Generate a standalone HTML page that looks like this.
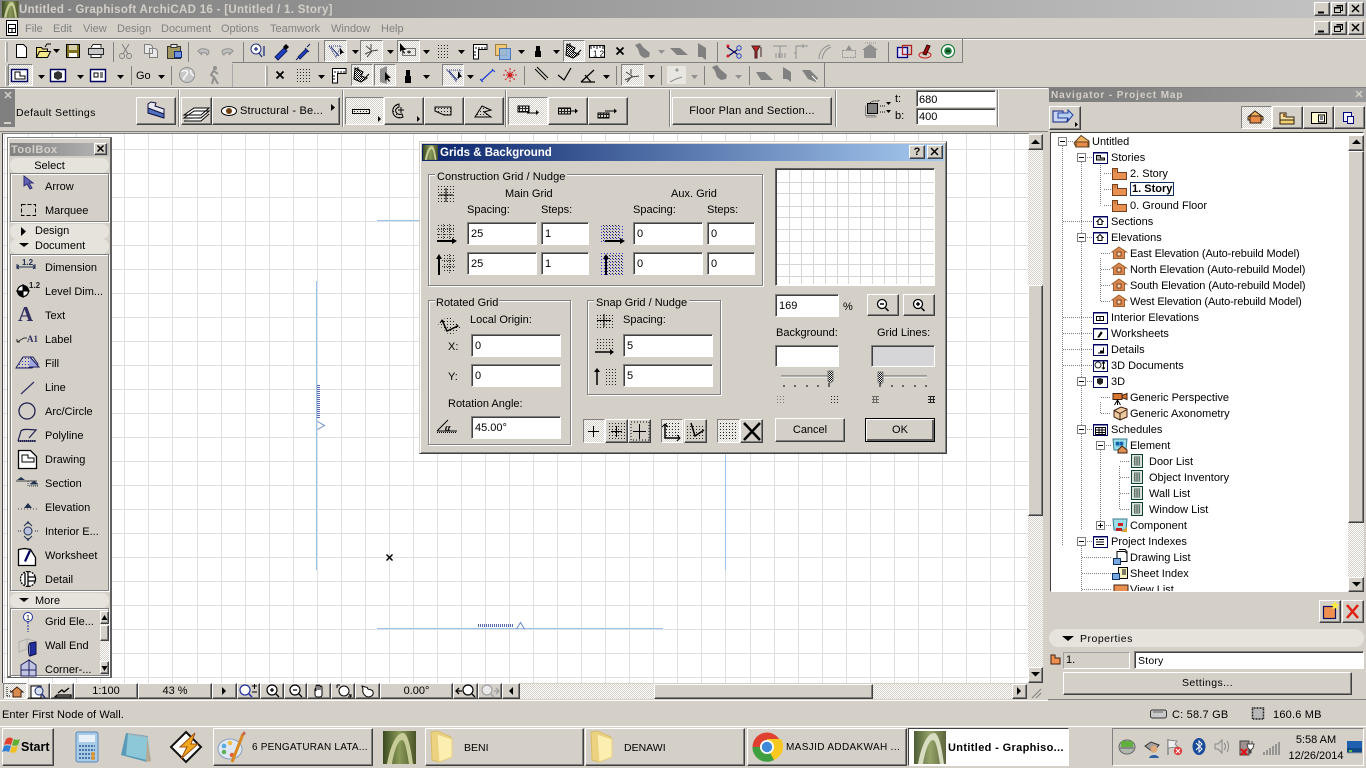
<!DOCTYPE html>
<html><head><meta charset="utf-8"><title>ArchiCAD</title>
<style>
html,body{margin:0;padding:0;width:1366px;height:768px;overflow:hidden;background:#d4d0c8}
body{position:relative;font:11px/14px "Liberation Sans",sans-serif;color:#000}
div,span{position:absolute;box-sizing:border-box}
.t{white-space:nowrap;height:14px;margin-top:1px}
.r{background:#d4d0c8;border:1px solid;border-color:#fff #404040 #404040 #fff;box-shadow:inset -1px -1px 0 #808080}
.f{background:#fff;border:1px solid;border-color:#808080 #fff #fff #808080;box-shadow:inset 1px 1px 0 #404040;padding:4px 0 0 3px;font-size:11px;line-height:14px;white-space:nowrap}
.p{border:1px solid;border-color:#808080 #fff #fff #808080;background-color:#e8e6e0;background-image:conic-gradient(#fff 25%,#d4d0c8 0 50%,#fff 0 75%,#d4d0c8 0);background-size:2px 2px}
.g{border:1px solid #808080;box-shadow:1px 1px 0 #fff,inset 1px 1px 0 #fff}
.pill{background:#e6e3dc;border-radius:7px;height:15px;left:10px;width:99px;text-align:left;margin-top:0}
.d{background-image:conic-gradient(#fff 25%,#d4d0c8 0 50%,#fff 0 75%,#d4d0c8 0);background-size:2px 2px}
.c{text-align:center}
.gr{color:#808080}
svg{position:absolute;left:0;top:0;overflow:visible}
</style></head><body>

<!-- title bar -->
<div style="left:0;top:0;width:1366px;height:18px;background:linear-gradient(90deg,#808080,#c4c4c4)"></div>
<div class="t" style="left:19px;top:2px;font-weight:bold;color:#d4d0c8;font-size:11.5px;letter-spacing:.3px">Untitled - Graphisoft ArchiCAD 16 - [Untitled / 1. Story]</div>
<div class="r" style="left:1314px;top:2px;width:16px;height:14px"></div>
<div class="r" style="left:1331px;top:2px;width:16px;height:14px"></div>
<div class="r" style="left:1348px;top:2px;width:16px;height:14px"></div>
<div class="r" style="left:1314px;top:21px;width:16px;height:14px"></div>
<div class="r" style="left:1331px;top:21px;width:16px;height:14px"></div>
<div class="r" style="left:1348px;top:21px;width:16px;height:14px"></div>

<!-- menu -->
<div class="t gr" style="left:25px;top:21px">File</div>
<div class="t gr" style="left:53px;top:21px">Edit</div>
<div class="t gr" style="left:83px;top:21px">View</div>
<div class="t gr" style="left:117px;top:21px">Design</div>
<div class="t gr" style="left:161px;top:21px">Document</div>
<div class="t gr" style="left:221px;top:21px">Options</div>
<div class="t gr" style="left:270px;top:21px">Teamwork</div>
<div class="t gr" style="left:331px;top:21px">Window</div>
<div class="t gr" style="left:381px;top:21px">Help</div>

<!-- toolbars frame -->
<div style="left:0;top:38px;width:1366px;height:1px;background:#808080"></div>
<div style="left:0;top:39px;width:1366px;height:1px;background:#fff"></div>
<div style="left:962px;top:39px;width:1px;height:24px;background:#808080"></div>
<div style="left:232px;top:62px;width:731px;height:1px;background:#808080"></div>
<div style="left:824px;top:63px;width:1px;height:24px;background:#808080"></div>
<div style="left:0;top:87px;width:1366px;height:1px;background:#808080"></div>
<div style="left:0;top:88px;width:1048px;height:1px;background:#fff"></div>

<!-- pressed toolbar buttons -->
<div class="p" style="left:324px;top:40px;width:23px;height:22px"></div>
<div class="p" style="left:360px;top:40px;width:23px;height:22px"></div>
<div class="p" style="left:397px;top:40px;width:23px;height:22px"></div>
<div class="p" style="left:563px;top:40px;width:22px;height:22px"></div>
<div class="p" style="left:8px;top:64px;width:25px;height:22px"></div>
<div class="p" style="left:351px;top:64px;width:22px;height:22px"></div>
<div class="p" style="left:374px;top:64px;width:22px;height:22px"></div>
<div class="p" style="left:442px;top:64px;width:22px;height:22px"></div>
<div class="p" style="left:621px;top:64px;width:23px;height:22px"></div>
<div class="t" style="left:136px;top:68px">Go</div>

<!-- info box -->
<div style="left:0;top:89px;width:15px;height:38px;background:#808080"></div>
<div class="t" style="left:16px;top:105px;font-size:10.5px;letter-spacing:.35px">Default Settings</div>
<div class="r" style="left:136px;top:97px;width:40px;height:28px"></div>
<div class="r" style="left:181px;top:97px;width:31px;height:28px"></div>
<div class="r" style="left:212px;top:97px;width:128px;height:28px"></div>
<div class="t" style="left:240px;top:103px;font-size:11px;letter-spacing:.2px">Structural - Be...</div>
<div class="p" style="left:345px;top:97px;width:39px;height:28px"></div>
<div class="r" style="left:384px;top:97px;width:40px;height:28px"></div>
<div class="r" style="left:424px;top:97px;width:40px;height:28px"></div>
<div class="r" style="left:464px;top:97px;width:40px;height:28px"></div>
<div class="p" style="left:508px;top:97px;width:40px;height:28px"></div>
<div class="r" style="left:548px;top:97px;width:40px;height:28px"></div>
<div class="r" style="left:588px;top:97px;width:40px;height:28px"></div>
<div class="r c" style="left:672px;top:97px;width:160px;height:28px;padding-top:6px;letter-spacing:.2px">Floor Plan and Section...</div>
<div class="t" style="left:895px;top:91px">t:</div>
<div class="t" style="left:895px;top:108px">b:</div>
<div class="f" style="left:916px;top:90px;width:80px;height:17px;padding:2px 0 0 2px">680</div>
<div class="f" style="left:916px;top:108px;width:80px;height:17px;padding:1px 0 0 2px">400</div>

<!-- canvas -->
<div style="left:0;top:131px;width:1048px;height:1px;background:#808080"></div>
<div style="left:2px;top:133px;width:1027px;height:550px;background:#fff;border-left:1px solid #404040;border-top:1px solid #808080"></div>

<svg width="1366" height="768" style="z-index:0">
<path shape-rendering="crispEdges" fill="none" stroke="#dfdfe2" d="M4.5 134V683M28.5 134V683M52.5 134V683M76.5 134V683M100.5 134V683M124.5 134V683M148.5 134V683M172.5 134V683M197.5 134V683M221.5 134V683M245.5 134V683M269.5 134V683M293.5 134V683M317.5 134V683M341.5 134V683M365.5 134V683M389.5 134V683M413.5 134V683M437.5 134V683M461.5 134V683M485.5 134V683M509.5 134V683M533.5 134V683M557.5 134V683M581.5 134V683M605.5 134V683M629.5 134V683M653.5 134V683M677.5 134V683M701.5 134V683M725.5 134V683M750.5 134V683M774.5 134V683M798.5 134V683M822.5 134V683M846.5 134V683M870.5 134V683M894.5 134V683M918.5 134V683M942.5 134V683M966.5 134V683M990.5 134V683M1014.5 134V683M3 149.5H1028M3 173.5H1028M3 197.5H1028M3 221.5H1028M3 245.5H1028M3 269.5H1028M3 293.5H1028M3 317.5H1028M3 341.5H1028M3 365.5H1028M3 389.5H1028M3 413.5H1028M3 437.5H1028M3 461.5H1028M3 485.5H1028M3 509.5H1028M3 533.5H1028M3 557.5H1028M3 581.5H1028M3 605.5H1028M3 629.5H1028M3 653.5H1028M3 677.5H1028"/>
<path shape-rendering="crispEdges" fill="none" stroke="#9cc4ea" d="M316.5 281V570M725.5 455V570M377 628.5H663M377 220.5H419"/>
<path fill="none" stroke="#5a6ab8" stroke-width="3" stroke-dasharray="1 1" d="M318.5 385V418M478 625.5H514"/>
<path fill="none" stroke="#6a8ac8" d="M317.500 421.500L324.500 425.500L317.500 429.500M516.500 629L520.500 622.500L524.500 629"/>
<path fill="none" stroke="#000" stroke-width="1.500" d="M386.500 554.500L392.500 560.500M392.500 554.500L386.500 560.500"/>
</svg>

<!-- vertical scrollbar -->
<div class="d" style="left:1028px;top:134px;width:15px;height:549px"></div>
<div class="r" style="left:1028px;top:134px;width:15px;height:16px"></div>
<div class="r" style="left:1028px;top:285px;width:15px;height:231px"></div>
<div class="r" style="left:1028px;top:667px;width:15px;height:16px"></div>

<!-- bottom bar -->
<div style="left:0;top:683px;width:1048px;height:17px;background:#d4d0c8"></div>
<div class="p" style="left:3px;top:683px;width:24px;height:16px"></div>
<div class="r" style="left:27px;top:683px;width:23px;height:16px"></div>
<div class="r" style="left:50px;top:683px;width:24px;height:16px"></div>
<div class="r c" style="left:74px;top:683px;width:64px;height:16px;line-height:15px">1:100</div>
<div class="r c" style="left:138px;top:683px;width:74px;height:16px;line-height:15px">43 %</div>
<div class="r" style="left:212px;top:683px;width:25px;height:16px"></div>
<div class="r" style="left:237px;top:683px;width:23px;height:16px"></div>
<div class="r" style="left:260px;top:683px;width:24px;height:16px"></div>
<div class="r" style="left:284px;top:683px;width:23px;height:16px"></div>
<div class="r" style="left:307px;top:683px;width:24px;height:16px"></div>
<div class="r" style="left:331px;top:683px;width:24px;height:16px"></div>
<div class="r" style="left:355px;top:683px;width:25px;height:16px"></div>
<div class="r c" style="left:380px;top:683px;width:73px;height:16px;line-height:15px">0.00°</div>
<div class="r" style="left:453px;top:683px;width:25px;height:16px"></div>
<div class="r" style="left:478px;top:683px;width:24px;height:16px"></div>
<div class="r" style="left:502px;top:683px;width:18px;height:16px"></div>
<div class="d" style="left:520px;top:684px;width:494px;height:15px"></div>
<div class="r" style="left:654px;top:684px;width:219px;height:15px"></div>
<div class="r" style="left:1012px;top:684px;width:15px;height:15px"></div>
<div style="left:0;top:700px;width:1048px;height:1px;background:#fff"></div>

<!-- toolbox -->
<div style="left:7px;top:137px;width:105px;height:541px;background:#d4d0c8;border:1px solid #808080;border-right:2px solid #606060;border-bottom:2px solid #606060;box-shadow:inset 1px 1px 0 #fff"></div>
<div style="left:10px;top:143px;width:99px;height:13px;background:linear-gradient(90deg,#808080,#b8b8b8)"></div>
<div class="t" style="left:11px;top:142px;font-weight:bold;color:#d4d0c8;letter-spacing:.5px">ToolBox</div>
<div class="r" style="left:94px;top:143px;width:13px;height:12px"></div>
<div class="pill t c" style="top:158px;text-align:center;padding-right:20px;line-height:16px;width:99px;padding-left:0">Select</div>
<div class="g" style="left:10px;top:173px;width:99px;height:49px"></div>
<div class="pill t" style="top:224px;padding-left:25px;line-height:15px">Design</div>
<div class="pill t" style="top:239px;padding-left:25px;line-height:15px">Document</div>
<div class="g" style="left:10px;top:254px;width:99px;height:337px"></div>
<div class="pill t" style="top:593px;padding-left:25px;line-height:17px">More</div>
<div class="g" style="left:10px;top:608px;width:99px;height:68px"></div>
<div class="t" style="left:45px;top:179px">Arrow</div>
<div class="t" style="left:45px;top:203px">Marquee</div>
<div class="t" style="left:45px;top:260px">Dimension</div>
<div class="t" style="left:45px;top:284px">Level Dim...</div>
<div class="t" style="left:45px;top:308px">Text</div>
<div class="t" style="left:45px;top:332px">Label</div>
<div class="t" style="left:45px;top:356px">Fill</div>
<div class="t" style="left:45px;top:380px">Line</div>
<div class="t" style="left:45px;top:404px">Arc/Circle</div>
<div class="t" style="left:45px;top:428px">Polyline</div>
<div class="t" style="left:45px;top:452px">Drawing</div>
<div class="t" style="left:45px;top:476px">Section</div>
<div class="t" style="left:45px;top:500px">Elevation</div>
<div class="t" style="left:45px;top:524px">Interior E...</div>
<div class="t" style="left:45px;top:548px">Worksheet</div>
<div class="t" style="left:45px;top:572px">Detail</div>
<div class="t" style="left:45px;top:614px">Grid Ele...</div>
<div class="t" style="left:45px;top:638px">Wall End</div>
<div class="t" style="left:45px;top:662px">Corner-...</div>
<div class="d" style="left:100px;top:611px;width:9px;height:63px"></div>
<div class="r" style="left:100px;top:611px;width:9px;height:13px"></div>
<div class="r" style="left:100px;top:625px;width:9px;height:16px"></div>
<div class="r" style="left:100px;top:661px;width:9px;height:13px"></div>

<!-- navigator -->
<div style="left:1048px;top:88px;width:318px;height:611px;background:#d4d0c8"></div>
<div style="left:1049px;top:88px;width:317px;height:14px;background:linear-gradient(90deg,#7c7c7c,#9a9a9a)"></div>
<div class="t" style="left:1051px;top:88px;font-weight:bold;color:#d4d0c8;font-size:10px;letter-spacing:.9px">Navigator - Project Map</div>
<div class="r" style="left:1049px;top:106px;width:32px;height:24px"></div>
<div class="p" style="left:1241px;top:106px;width:31px;height:23px"></div>
<div class="r" style="left:1272px;top:106px;width:31px;height:23px"></div>
<div class="r" style="left:1303px;top:106px;width:31px;height:23px"></div>
<div class="r" style="left:1334px;top:106px;width:31px;height:23px"></div>
<div style="left:1050px;top:132px;width:314px;height:460px;background:#fff;border:1px solid;border-color:#404040 #fff #fff #404040;overflow:hidden">
<div style="left:-1051px;top:-133px;width:1366px;height:768px">
<svg width="1366" height="768">
<defs>
<g id="st"><path d="M.5 .5H5.500V4.500H14.500V11.500H.5Z" fill="#e89050" stroke="#704020"/><path d="M2 1.500h2v2h-2z" fill="#c07030"/></g>
<g id="el"><path d="M7 0L14.500 5H12.500V11.500H1.500V5H0Z" fill="#d98a52" stroke="#a06030"/><rect x="5" y="5" width="4" height="4" fill="#f2d8a8" stroke="#804020"/></g>
<g id="bx"><rect x=".5" y=".5" width="14" height="11" fill="#fff" stroke="#000060"/><path d="M.5 1h14" stroke="#000060"/></g>
<g id="li"><rect x=".5" y=".5" width="11" height="13" fill="#d8e4dc" stroke="#104030"/><path d="M3 3h6M3 5h6M3 7h6M3 9h6M3 11h6M3.500 3v8M6 3v8M8.500 3v8" stroke="#607068" fill="none"/></g>
<g id="mn"><rect x=".5" y=".5" width="8" height="8" fill="#fff" stroke="#808080"/><path d="M2 4.500h5" stroke="#000"/></g>
<g id="pl"><rect x=".5" y=".5" width="8" height="8" fill="#fff" stroke="#808080"/><path d="M2 4.500h5M4.500 2v5" stroke="#000"/></g>
</defs>
<g fill="none" stroke="#808080" stroke-dasharray="1 1" shape-rendering="crispEdges">
<path d="M1062.500 146V545M1081.500 162V238M1081.500 242V382M1081.500 386V430M1081.500 434V530M1100.500 165V205.500M1100.500 258V301.500M1100.500 402V413.500M1100.500 450V525M1119.500 466V509.500"/>
<path d="M1066 141.500H1074M1085 157.500H1092M1104 173.500H1111M1104 189.500H1111M1104 205.500H1111M1063 221.500H1092M1085 237.500H1092M1101 253.500H1111M1101 269.500H1111M1101 285.500H1111M1101 301.500H1111M1063 317.500H1092M1063 333.500H1092M1063 349.500H1092M1063 365.500H1092M1085 381.500H1092M1101 397.500H1111M1101 413.500H1111M1085 429.500H1092M1104 445.500H1111M1120 461.500H1130M1120 477.500H1130M1120 493.500H1130M1120 509.500H1130M1104 525.500H1111M1085 541.500H1092M1082 557.500H1111M1082 573.500H1111M1082 589.500H1111"/>
<path d="M1081.500 546V592"/>
</g>
<use href="#mn" x="1058" y="137"/><use href="#mn" x="1077" y="153"/><use href="#mn" x="1077" y="233"/><use href="#mn" x="1077" y="377"/><use href="#mn" x="1077" y="425"/><use href="#mn" x="1096" y="441"/><use href="#pl" x="1096" y="521"/><use href="#mn" x="1077" y="537"/>
<path d="M1074 143L1081 135.500L1089 141V147H1076Z" fill="#f0b060" stroke="#604020"/><path d="M1076 147V142H1088V147Z" fill="#e88a48" stroke="#604020"/>
<use href="#bx" x="1093" y="152"/><path d="M1096.500 160v-4.500h4v2.500h4v2z" fill="#b0b0b0" stroke="#000"/>
<use href="#st" x="1112" y="168"/><use href="#st" x="1112" y="184"/><use href="#st" x="1112" y="200"/>
<use href="#bx" x="1093" y="216"/><path d="M1097 221.500l3-3 3 3h-1v3h-4v-3z" fill="#fff" stroke="#000"/>
<use href="#bx" x="1093" y="232"/><path d="M1097 237.500l3-3 3 3h-1v3h-4v-3z" fill="#fff" stroke="#000"/>
<use href="#el" x="1112" y="247"/><use href="#el" x="1112" y="263"/><use href="#el" x="1112" y="279"/><use href="#el" x="1112" y="295"/>
<use href="#bx" x="1093" y="312"/><path d="M1096.500 316.500h7v4h-7zM1100 316.500v4" fill="none" stroke="#000"/>
<use href="#bx" x="1093" y="328"/><path d="M1098 337l3-5 1 1-3 4zM1096 339.500h8" fill="#444" stroke="#000"/>
<use href="#bx" x="1093" y="344"/><path d="M1098 352.500h2v-2h3v-3h1v6h-6z" fill="#000"/>
<use href="#bx" x="1093" y="360"/><circle cx="1098" cy="365" r="3" fill="none" stroke="#222"/><path d="M1103.500 362v7M1102 363.500l1.500-1.500 1.500 1.500M1102 367.500l1.500 1.500 1.500-1.500" fill="none" stroke="#000"/>
<use href="#bx" x="1093" y="376"/><path d="M1097 379l3-1 3 1v4l-3 2-3-2z" fill="#222"/>
<path d="M1113 393.500h9v6h-9zM1122 395.500l5-2v6l-5-2z" fill="#d87830" stroke="#402010"/><path d="M1117.500 400v5M1114.500 405l3-5 3 5" fill="none" stroke="#000"/>
<path d="M1114 410.500l7-3.500 6 2v8l-7 3-6-3z" fill="#eec9a0" stroke="#402010"/><path d="M1114 410.500l6 3v7M1120 413.500l7-4" fill="none" stroke="#402010"/>
<use href="#bx" x="1093" y="424"/><path d="M1095.500 427.500h10v7h-10zM1095.500 430h10M1095.500 432.500h10M1099 427.500v7M1102 427.500v7" fill="none" stroke="#000"/>
<path d="M1113 439h14l-1 11h-12z" fill="#9adfe8" stroke="#3a7a90"/><path d="M1116 442h3v3h-3zM1120 442h3v3h-3zM1116 446h7" fill="#1060b0" stroke="#1060b0" stroke-width=".6"/><path d="M1118 450l4-4 5 4v3h-9z" fill="#e09050" stroke="#402010"/>
<use href="#li" x="1131" y="454"/><use href="#li" x="1131" y="470"/><use href="#li" x="1131" y="486"/><use href="#li" x="1131" y="502"/>
<path d="M1113 519h14l-1 11h-12z" fill="#9adfe8" stroke="#3a7a90"/><path d="M1118 523h5v3h-5z" fill="#d02020"/><path d="M1116 528h6v3h-6z" fill="#c02020"/><path d="M1121 532l6-5v5z" fill="#e0a030"/>
<use href="#bx" x="1093" y="536"/><path d="M1096 539.500h2M1096 542h8M1096 544.500h8M1099 539.500h5" stroke="#000" fill="none"/>
<path d="M1117 551.500h8l2 2v8h-10z" fill="#fff" stroke="#000"/><path d="M1119 549.500h6l2 2v2" fill="none" stroke="#000"/><rect x="1113.500" y="558.500" width="7" height="6" fill="#78a8e0" stroke="#103060"/>
<rect x="1118.500" y="567.500" width="9" height="11" fill="#f8f4c0" stroke="#000"/><path d="M1122 570h4M1122 572h4M1122 574h4" stroke="#000"/><rect x="1112.500" y="573.500" width="7" height="6" fill="#78a8e0" stroke="#103060"/>
<rect x="1114" y="585" width="14" height="10" fill="#e89050" stroke="#402010"/>
</svg>
<div class="t" style="left:1092px;top:134px">Untitled</div>
<div class="t" style="left:1111px;top:150px">Stories</div>
<div class="t" style="left:1130px;top:166px">2. Story</div>
<div class="t" style="left:1130px;top:182px;font-weight:bold;border:1px solid #103060;padding:0 1px;line-height:13px;height:14px;margin-top:0">1. Story</div>
<div class="t" style="left:1130px;top:198px">0. Ground Floor</div>
<div class="t" style="left:1111px;top:214px">Sections</div>
<div class="t" style="left:1111px;top:230px">Elevations</div>
<div class="t" style="left:1130px;top:246px;letter-spacing:-.1px">East Elevation (Auto-rebuild Model)</div>
<div class="t" style="left:1130px;top:262px;letter-spacing:-.07px">North Elevation (Auto-rebuild Model)</div>
<div class="t" style="left:1130px;top:278px;letter-spacing:-.12px">South Elevation (Auto-rebuild Model)</div>
<div class="t" style="left:1130px;top:294px;letter-spacing:-.12px">West Elevation (Auto-rebuild Model)</div>
<div class="t" style="left:1111px;top:310px">Interior Elevations</div>
<div class="t" style="left:1111px;top:326px">Worksheets</div>
<div class="t" style="left:1111px;top:342px">Details</div>
<div class="t" style="left:1111px;top:358px">3D Documents</div>
<div class="t" style="left:1111px;top:374px">3D</div>
<div class="t" style="left:1130px;top:390px">Generic Perspective</div>
<div class="t" style="left:1130px;top:406px">Generic Axonometry</div>
<div class="t" style="left:1111px;top:422px">Schedules</div>
<div class="t" style="left:1130px;top:438px">Element</div>
<div class="t" style="left:1149px;top:454px">Door List</div>
<div class="t" style="left:1149px;top:470px">Object Inventory</div>
<div class="t" style="left:1149px;top:486px">Wall List</div>
<div class="t" style="left:1149px;top:502px">Window List</div>
<div class="t" style="left:1130px;top:518px">Component</div>
<div class="t" style="left:1111px;top:534px">Project Indexes</div>
<div class="t" style="left:1130px;top:550px">Drawing List</div>
<div class="t" style="left:1130px;top:566px">Sheet Index</div>
<div class="t" style="left:1130px;top:582px">View List</div>
</div></div>
<div class="r" style="left:1348px;top:135px;width:16px;height:16px"></div>
<div class="r" style="left:1348px;top:151px;width:16px;height:372px"></div>
<div class="d" style="left:1348px;top:523px;width:16px;height:54px"></div>
<div class="r" style="left:1348px;top:577px;width:16px;height:15px"></div>
<div class="r" style="left:1319px;top:600px;width:22px;height:23px"></div>
<div class="r" style="left:1342px;top:600px;width:22px;height:23px"></div>
<div style="left:1049px;top:629px;width:315px;height:18px;background:#e6e3dc;border-radius:9px"></div>
<div class="t" style="left:1080px;top:631px;font-size:10.5px;letter-spacing:.5px">Properties</div>
<div class="t" style="left:1063px;top:652px;width:67px;height:17px;border:1px solid;border-color:#a0a0a0 #fff #fff #a0a0a0;padding-left:2px;line-height:15px;background:#d4d0c8;margin-top:0">1.</div>
<div class="f" style="left:1134px;top:651px;width:230px;height:18px;padding:2px 0 0 3px;font-size:10.5px;letter-spacing:.2px">Story</div>
<div class="r c" style="left:1063px;top:672px;width:289px;height:23px;line-height:21px;font-size:10.5px;letter-spacing:.4px">Settings...</div>
<div style="left:1048px;top:699px;width:318px;height:1px;background:#808080"></div>

<!-- status -->
<div class="t" style="left:2px;top:707px;letter-spacing:.1px">Enter First Node of Wall.</div>
<div class="t" style="left:1172px;top:707px;letter-spacing:.2px">C: 58.7 GB</div>
<div class="t" style="left:1273px;top:707px;letter-spacing:.2px">160.6 MB</div>

<!-- dialog -->
<div style="left:419px;top:141px;width:528px;height:313px;background:#d4d0c8;border:1px solid;border-color:#d4d0c8 #404040 #404040 #d4d0c8;box-shadow:inset 1px 1px 0 #fff,inset -1px -1px 0 #808080"></div>
<div style="left:422px;top:144px;width:522px;height:17px;background:linear-gradient(90deg,#0a246a,#a6caf0)"></div>
<div class="t" style="left:440px;top:145px;font-weight:bold;color:#fff;font-size:11.5px">Grids &amp; Background</div>
<div class="r c" style="left:909px;top:145px;width:16px;height:14px;font-weight:bold;line-height:12px">?</div>
<div class="r" style="left:927px;top:145px;width:16px;height:14px"></div>

<div class="g" style="left:428px;top:174px;width:335px;height:112px"></div>
<div class="t" style="left:435px;top:169px;background:#d4d0c8;padding:0 2px;letter-spacing:.05px">Construction Grid / Nudge</div>
<div class="t" style="left:505px;top:186px">Main Grid</div>
<div class="t" style="left:671px;top:186px">Aux. Grid</div>
<div class="t" style="left:467px;top:202px">Spacing:</div>
<div class="t" style="left:541px;top:202px">Steps:</div>
<div class="t" style="left:633px;top:202px">Spacing:</div>
<div class="t" style="left:707px;top:202px">Steps:</div>
<div class="f" style="left:467px;top:222px;width:70px;height:23px">25</div>
<div class="f" style="left:541px;top:222px;width:48px;height:23px">1</div>
<div class="f" style="left:633px;top:222px;width:70px;height:23px">0</div>
<div class="f" style="left:707px;top:222px;width:48px;height:23px">0</div>
<div class="f" style="left:467px;top:252px;width:70px;height:23px">25</div>
<div class="f" style="left:541px;top:252px;width:48px;height:23px">1</div>
<div class="f" style="left:633px;top:252px;width:70px;height:23px">0</div>
<div class="f" style="left:707px;top:252px;width:48px;height:23px">0</div>

<div class="g" style="left:428px;top:300px;width:143px;height:145px"></div>
<div class="t" style="left:435px;top:295px;background:#d4d0c8;padding:0 1px">Rotated Grid</div>
<div class="t" style="left:470px;top:312px">Local Origin:</div>
<div class="t" style="left:448px;top:339px">X:</div>
<div class="t" style="left:448px;top:369px">Y:</div>
<div class="t" style="left:448px;top:396px">Rotation Angle:</div>
<div class="f" style="left:471px;top:334px;width:90px;height:23px">0</div>
<div class="f" style="left:471px;top:364px;width:90px;height:23px">0</div>
<div class="f" style="left:471px;top:416px;width:90px;height:23px">45.00°</div>

<div class="g" style="left:587px;top:300px;width:134px;height:95px"></div>
<div class="t" style="left:594px;top:295px;background:#d4d0c8;padding:0 2px">Snap Grid / Nudge</div>
<div class="t" style="left:623px;top:312px">Spacing:</div>
<div class="f" style="left:623px;top:334px;width:90px;height:23px">5</div>
<div class="f" style="left:623px;top:364px;width:90px;height:23px">5</div>

<div class="p" style="left:583px;top:419px;width:22px;height:24px"></div>
<div class="r" style="left:605px;top:419px;width:23px;height:24px"></div>
<div class="r" style="left:628px;top:419px;width:23px;height:24px"></div>
<div class="p" style="left:661px;top:419px;width:22px;height:24px"></div>
<div class="r" style="left:684px;top:419px;width:23px;height:24px"></div>
<div class="p" style="left:717px;top:419px;width:23px;height:24px"></div>
<div class="r" style="left:740px;top:419px;width:23px;height:24px"></div>

<div style="left:775px;top:168px;width:160px;height:118px;background:#fff;border:1px solid;border-color:#606060 #fff #fff #606060;box-shadow:inset 1px 1px 0 #404040"></div>
<svg width="1366" height="768"><path shape-rendering="crispEdges" fill="none" stroke="#d6d6d6" d="M789.500 170V284M801.500 170V284M813.500 170V284M825.500 170V284M837.500 170V284M848.500 170V284M860.500 170V284M872.500 170V284M884.500 170V284M896.500 170V284M908.500 170V284M920.500 170V284M777 182.500H934M777 193.500H934M777 206.500H934M777 217.500H934M777 229.500H934M777 241.500H934M777 253.500H934M777 264.500H934M777 276.500H934"/></svg>
<div class="f" style="left:775px;top:294px;width:64px;height:23px">169</div>
<div class="t" style="left:843px;top:299px">%</div>
<div class="r" style="left:867px;top:294px;width:32px;height:22px"></div>
<div class="r" style="left:903px;top:294px;width:32px;height:22px"></div>
<div class="t" style="left:776px;top:325px">Background:</div>
<div class="t" style="left:877px;top:325px">Grid Lines:</div>
<div class="f" style="left:775px;top:345px;width:64px;height:22px"></div>
<div class="f" style="left:871px;top:345px;width:64px;height:22px;background:#d6d6d8"></div>
<div class="r c" style="left:775px;top:418px;width:70px;height:24px;line-height:23px">Cancel</div>
<div class="r c" style="left:865px;top:418px;width:70px;height:24px;line-height:22px;border:1px solid #000;box-shadow:inset 1px 1px 0 #fff,inset -2px -2px 0 #606060">OK</div>

<!-- taskbar -->
<div style="left:0;top:726px;width:1366px;height:42px;background:#d4d0c8;border-top:1px solid #fff"></div>
<div class="r" style="left:2px;top:728px;width:52px;height:38px"></div>
<div class="t" style="left:21px;top:739px;font-weight:bold;font-size:12.5px">Start</div>
<div class="r" style="left:213px;top:728px;width:160px;height:38px"></div>
<div class="t" style="left:252px;top:740px;font-size:10px;letter-spacing:.2px">6 PENGATURAN LATA...</div>
<div class="r" style="left:425px;top:728px;width:159px;height:38px"></div>
<div class="t" style="left:464px;top:740px;font-size:10.5px">BENI</div>
<div class="r" style="left:585px;top:728px;width:160px;height:38px"></div>
<div class="t" style="left:624px;top:740px;font-size:10.5px">DENAWI</div>
<div class="r" style="left:747px;top:728px;width:160px;height:38px"></div>
<div class="t" style="left:786px;top:740px;font-size:10px;letter-spacing:.35px">MASJID ADDAKWAH ...</div>
<div style="left:908px;top:728px;width:161px;height:38px;background:#fff;border:1px solid;border-color:#404040 #fff #fff #404040"></div>
<div class="t" style="left:948px;top:740px;font-weight:bold;letter-spacing:.35px">Untitled - Graphiso...</div>
<div style="left:1112px;top:728px;width:252px;height:38px;border:1px solid;border-color:#808080 #fff #fff #808080"></div>
<div class="t c" style="left:1283px;top:732px;width:66px">5:58 AM</div>
<div class="t c" style="left:1283px;top:748px;width:66px">12/26/2014</div>

<!-- icon overlay -->
<svg width="1366" height="768" style="z-index:5;pointer-events:none">
<defs>
<linearGradient id="ac" x1="0" x2="1"><stop offset="0" stop-color="#3a4a20"/><stop offset=".5" stop-color="#8a9a58"/><stop offset="1" stop-color="#4a5228"/></linearGradient>
<path id="dd" d="M0 0h7L3.500 4z"/>
<g id="fo"><path d="M0 1L6 0L20 6V26L8 31L1 29Z" fill="#ecd280" stroke="#d8bc68"/><path d="M6 3L21 8V26L8 31Z" fill="#fbeeb0" stroke="#e8d080"/></g>
<g id="arc"><rect width="33" height="33" fill="url(#ac)"/><path d="M4 33C8 12 14 2 20 2C25 2 28 18 30 33H26C24 20 22 9 19 9C15 9 11 20 9 33Z" fill="#c8cc98"/></g>
<g id="xb"><path d="M-3.500-3.500L3.500 3.500M3.500-3.500L-3.500 3.500" stroke="#000" stroke-width="1.800"/></g>
<pattern id="dp" width="3" height="3" patternUnits="userSpaceOnUse"><rect width="1" height="1" fill="#222"/></pattern>
<pattern id="bp" width="3" height="3" patternUnits="userSpaceOnUse"><rect x="1" y="1" width="1" height="1" fill="#3030d0"/></pattern>
<pattern id="hp" width="3" height="3" patternUnits="userSpaceOnUse"><rect width="3" height="1" fill="#222"/><rect width="1" height="3" fill="#222"/></pattern>
<pattern id="wh" width="2" height="2" patternUnits="userSpaceOnUse"><rect width="2" height="2" fill="#fff"/><rect width="1" height="1" fill="#000"/><rect x="1" y="1" width="1" height="1" fill="#000"/></pattern>
</defs>

<!-- title logos -->
<g transform="translate(2,1) scale(.5)"><use href="#arc"/></g>
<path d="M6.500 20.500h11v15h-11z" fill="#fff" stroke="#000"/><path d="M8.500 24.500h7v8h-7zM8.500 28.500h7M12 28.500v4" fill="none" stroke="#000"/>
<!-- window buttons -->
<path d="M1318 12.500h6M1318 31.500h6" stroke="#000" stroke-width="2"/>
<path d="M1336.500 5.500h6v5h-2M1334.500 7.500h6v5h-6zM1336.500 24.500h6v5h-2M1334.500 26.500h6v5h-6zM1334.500 8h6M1334.500 27h6M1336.500 6h6M1336.500 25h6" fill="none" stroke="#000"/>
<path d="M1352 5l7 7M1359 5l-7 7M1352 24l7 7M1359 24l-7 7" stroke="#000" stroke-width="1.500"/>

<!-- toolbar grips -->
<path d="M5.500 42v20M5.500 66v20M265.500 66v20" stroke="#fff"/><path d="M7 42v20M7 66v20M267 66v20" stroke="#808080"/>

<!-- toolbar 1 -->
<path d="M16.500 44.500h7l3 3v10h-10z" fill="#fff" stroke="#000"/>
<path d="M36.500 57.500v-10h5l1 1.500h5v3" fill="#f0dc78" stroke="#000"/><path d="M36.500 57.500l3-6h11l-3 6z" fill="#f4e888" stroke="#000"/><path d="M45 47l2-3h4" fill="none" stroke="#000"/>
<use href="#dd" x="53" y="49"/>
<path d="M66.500 44.500h13v13h-13z" fill="#807020" stroke="#000"/><path d="M69 45h8v5h-8z" fill="#d8d0a8"/><path d="M69 53h8v4h-8z" fill="#fff"/>
<path d="M91 47.500l2-3h8v3" fill="#fff" stroke="#222"/><path d="M88.500 48.500h15v6h-15z" fill="#c8c8c8" stroke="#222"/><path d="M91 54.500h10v3h-10z" fill="#fff" stroke="#222"/>
<path d="M113.500 42v20M188.500 42v20M243.500 42v20M318.500 42v20" stroke="#808080"/>
<path d="M122 44l6 10M129 44l-6 10" stroke="#808080" fill="none"/><circle cx="122" cy="56" r="2.500" fill="none" stroke="#808080"/><circle cx="129" cy="56" r="2.500" fill="none" stroke="#808080"/>
<path d="M144.500 44.500h6l2 2v7h-8zM149.500 48.500h6l2 2v7h-8z" fill="#e8e8e8" stroke="#808080"/>
<path d="M167.500 46.500h13v12h-13z" fill="#a09860" stroke="#333"/><path d="M171 44.500h6v3h-6z" fill="#e8e8e8" stroke="#333"/><path d="M174.500 51.500h7v6h-7z" fill="#7090e0" stroke="#103080"/>
<path d="M198 51c2-3 8-3 11 0 0 2-1 4-2 4 0-2-3-3-6-2l1 2z" fill="#c0c0c0" stroke="#909090"/><path d="M233 51c-2-3-8-3-11 0 0 2 1 4 2 4 0-2 3-3 6-2l-1 2z" fill="#c0c0c0" stroke="#909090"/>
<circle cx="256" cy="49" r="5" fill="#fff" stroke="#203080"/><path d="M259 53l3 4M254 49h4M256 47v4M264 46v10" stroke="#203080" stroke-width="1.300" fill="none"/>
<path d="M275 57l9-9 3 3-9 9z" fill="#2040c0" stroke="#102060"/><path d="M283 47l3-3 3 3-3 3z" fill="#000"/>
<path d="M298 57l8-8 2 2-8 8zM296 60l2-2M305 48l4 4M307 47l3-3" fill="#2040c0" stroke="#102060"/>
<g fill="none" stroke="#203080"><path d="M329 46h12l-5 11-7-11z" stroke-dasharray="1 1"/><path d="M331 47l8 9"/></g><path d="M340 48v7l2-2 2 0z" fill="#000"/>
<use href="#dd" x="352" y="50"/>
<path d="M366 46l6 5-5 6M371 44v5M378 50l-6 1-7 3" stroke="#444" fill="none"/><use href="#dd" x="387" y="50"/>
<path d="M400 43v9l2-2 2 4 1-1-2-3h3z" fill="#000"/><rect x="402.500" y="48.500" width="13" height="7" fill="none" stroke="#000" stroke-dasharray="1 1"/><path d="M409 50.500v3M407 52h4" stroke="#000"/>
<use href="#dd" x="423" y="50"/>
<path d="M436 45h14v14h-14z" fill="url(#dp)"/><use href="#dd" x="458" y="50"/>
<path d="M473.500 59V44.500H487v5h-8.500V59z" fill="#fff" stroke="#000"/><path d="M476 47v2M479 47v2M482 47v2M485 47v2M474 52h2M474 55h2" stroke="#000"/>
<rect x="495.500" y="44.500" width="11" height="11" fill="#f0c878" stroke="#a08040"/><rect x="499.500" y="48.500" width="11" height="11" fill="#88b4e8" fill-opacity=".8" stroke="#4878b8"/><use href="#dd" x="518" y="50"/>
<path d="M535 51h6v6h-6z" fill="#000"/><path d="M536 46h4v5h-4z" fill="#000"/><use href="#dd" x="553" y="50"/>
<path d="M567 44l8 4-2 4 6 2-6 4-7-3z" fill="url(#wh)" stroke="#000"/><path d="M570 43v4M581 50l-3 3" stroke="#000"/>
<rect x="589.500" y="45.500" width="15" height="12" fill="#fff" stroke="#000"/><path d="M591 46v3M594 46v2M597 46v3M600 46v2M603 46v3" stroke="#000"/><text x="593" y="56.500" font-size="8" font-family="Liberation Sans">1 2</text>
<use href="#xb" x="620" y="51"/>
<path d="M635 45l5-2 3 4 7 6-1 4-5 1-4-3-2-6z" fill="#808080"/><use href="#dd" x="658" y="50" fill="#909090"/>
<path d="M670 48h10l8 7h-11z" fill="#808080"/>
<path d="M698 43l8 5v12l-4-3-4 0z" fill="#808080"/>
<path d="M717.500 42v20M888.500 42v20" stroke="#808080"/>
<path d="M727 47l10 7M727 57l10-7" fill="none" stroke="#000060" stroke-width="1.200"/><circle cx="728" cy="46" r="1.500" fill="#d02020"/><circle cx="728" cy="56" r="1.500" fill="#d02020"/><circle cx="739" cy="48" r="2.200" fill="none" stroke="#2040c0"/><circle cx="739" cy="56" r="2.200" fill="none" stroke="#2040c0"/>
<path d="M752 46h8l-3 5v7h-2v-7z" fill="#c02020" stroke="#402020"/><path d="M761 47v10" stroke="#402020"/>
<path d="M773 46h14M780 46v12M776 53v5M779 53v5M782 53v5M785 53v5" stroke="#909090" fill="none"/>
<path d="M796 59V46h12M796 53h-2M803 44v4" stroke="#909090" fill="none"/>
<path d="M819 59c0-7 4-12 11-14M822 59c1-6 4-10 9-12" stroke="#909090" fill="none"/>
<path d="M842.500 50.500h13v7h-13z" fill="none" stroke="#909090" stroke-dasharray="2 1"/><path d="M846 50l3-5 3 5z" fill="#909090"/>
<path d="M862 50l8-6 8 6h-2v8h-12v-8z" fill="#909090"/><path d="M865 43h11" stroke="#909090" stroke-dasharray="1 1"/>
<rect x="897.500" y="47.500" width="10" height="10" fill="#e0e0f8" stroke="#000080" stroke-width="1.300"/><rect x="902.500" y="45.500" width="9" height="9" fill="none" stroke="#b02020" stroke-width="1.300"/>
<ellipse cx="925" cy="55" rx="6" ry="3" fill="none" stroke="#d02020"/><path d="M923 54l4-9 3 1-4 9z" fill="#a01010" stroke="#300000"/>
<circle cx="948" cy="51" r="6.500" fill="#fff" stroke="#208040" stroke-width="1.200"/><circle cx="948" cy="51" r="3.800" fill="#208040"/><path d="M946 51h4" stroke="#000"/>

<!-- toolbar 2 -->
<path d="M11.500 69.500h16v12h-16z" fill="#fff" stroke="#000060" stroke-width="1.400"/><path d="M15 79v-7h5v4h5v3z" fill="#fff" stroke="#000"/>
<use href="#dd" x="38" y="75"/>
<path d="M50.500 69.500h15v12h-15z" fill="#fff" stroke="#000060" stroke-width="1.400"/><path d="M54 73l4-2 4 2v5l-4 2-4-2z" fill="#333"/>
<use href="#dd" x="77" y="75"/>
<path d="M90.500 69.500h15v12h-15z" fill="#fff" stroke="#000060" stroke-width="1.400"/><path d="M94 73h4v4h-4zM100 73h3M100 75h3M100 77h3" fill="none" stroke="#000"/>
<use href="#dd" x="117" y="75"/>
<path d="M131.500 66v19" stroke="#808080"/><use href="#dd" x="158" y="75"/><path d="M171.500 66v19" stroke="#808080"/>
<circle cx="187" cy="75" r="7.500" fill="#c8c8c8" stroke="#909090"/><path d="M181 72c4-3 8-1 6 2s-4 3-3 6M191 70c-2 3 2 5 3 6" fill="none" stroke="#fff" stroke-width="1.300"/>
<circle cx="215" cy="68" r="2" fill="#909090"/><path d="M214 70l-3 5 3 2-2 7M214 77l4 7M214 71l4 3" stroke="#909090" stroke-width="2" fill="none"/>
<path d="M232.500 64v23" stroke="#a8a8a8"/>
<use href="#xb" x="280" y="75"/>
<path d="M296 68h14v14h-14z" fill="url(#dp)"/><use href="#dd" x="318" y="75"/>
<path d="M332.500 83V68.500H346v5h-8.500V83z" fill="#fff" stroke="#000"/><path d="M335 71v2M338 71v2M341 71v2M344 71v2M333 76h2M333 79h2" stroke="#000"/>
<path d="M355 68l8 4-2 4 6 2-6 4-7-3z" fill="url(#wh)" stroke="#000"/><path d="M358 67v4M369 74l-3 3" stroke="#000"/>
<path d="M380 69l7-3v18l-7-2z" fill="#909090"/><path d="M385 72v9l2-2 2 3 1-1-2-3h3z" fill="#000"/>
<path d="M405 76h6v7h-6z" fill="#000"/><path d="M406 70h4v6h-4z" fill="#000"/><use href="#dd" x="423" y="75"/>
<path d="M447 70h14l-5 11-9-11z" fill="none" stroke="#203080" stroke-dasharray="1 1"/><path d="M449 71l8 9" stroke="#203080"/><path d="M458 71v8l2-2 2 0z" fill="#000"/>
<use href="#dd" x="467" y="75"/>
<path d="M481 81l12-11" stroke="#2040d0" stroke-width="1.300"/><path d="M480 79l3 3M492 69l3 3" stroke="#2040d0"/>
<path d="M503 75h14M510 68v14M505 70l10 10M515 70l-10 10" stroke="#d02020" stroke-dasharray="2 1" fill="none"/><circle cx="510" cy="75" r="2" fill="#d02020"/>
<path d="M524.500 66v19" stroke="#808080"/>
<path d="M535 69l11 11M537 67l11 11" stroke="#000" fill="none"/>
<path d="M558 75l6 5 7-12" stroke="#000" stroke-width="1.200" fill="none"/>
<path d="M581 82l13-12M581 82h14M585 75l6 7" stroke="#000" fill="none" stroke-width="1.300"/><use href="#dd" x="603" y="75"/>
<path d="M616.500 66v19" stroke="#808080"/>
<path d="M626 72l6 4-5 6M631 69v5M639 76l-7 1-7 3" stroke="#444" fill="none"/><use href="#dd" x="648" y="75"/>
<path d="M661.500 66v19M704.500 66v19M749.500 66v19" stroke="#808080"/>
<path d="M667 66h19v18h-19z" fill="#e8e6e0"/><path d="M675 70h4M677 68v4M670 82l6-3 6-2" stroke="#909090" fill="none"/>
<use href="#dd" x="691" y="75" fill="#909090"/>
<path d="M712 67l5-2 3 4 7 6-1 4-5 1-4-3-2-6z" fill="#808080"/><use href="#dd" x="735" y="75" fill="#909090"/>
<path d="M756 72h9l8 8h-12z" fill="#808080"/>
<path d="M783 67l8 5v10l-4-3-4 0z" fill="#808080"/>
<path d="M802 70h8l8 8-2 4-8-3z" fill="#808080"/><path d="M812 76l5 5" stroke="#fff"/>

<!-- info box -->
<path d="M5 92l6 6M11 92l-6 6" stroke="#d4d0c8" stroke-width="1.500"/><path d="M4 123h7" stroke="#d4d0c8" stroke-width="2"/>
<path d="M148 104l3-2 5 1-1 3 9 3v9l-16-5z" fill="#e8e8f0" stroke="#101040"/><path d="M148 108l16 6v4l-16-5z" fill="#5070c0" stroke="#101040"/>
<path d="M184 115l10-7h15l-8 7zM184 118l10-7h15l-8 7zM184 121h17l8-7" fill="#fff" stroke="#000"/>
<ellipse cx="229" cy="111" rx="7.500" ry="4.500" fill="#fff" stroke="#000"/><circle cx="229" cy="111" r="3" fill="#704010"/>
<path d="M331 104v7l4-3.500z"/>
<path d="M352.500 109.500h17v4h-17z" fill="url(#dp)" stroke="#000"/><path d="M378 116v6l3-3z"/>
<path d="M399 104c-5 1-7 5-6 9s6 6 10 4l-1-3c-3 1-5 0-6-2s0-4 3-5z" fill="url(#dp)" stroke="#000"/><path d="M398 110h6M401 107v6" stroke="#000"/><path d="M417 116v6l3-3z"/>
<path d="M435 107h16v8l-7 0-9-4z" fill="url(#dp)" stroke="#000"/>
<path d="M475 117L482 106l9 4-7 2 7 5z" fill="url(#dp)" stroke="#000"/>
<path d="M518 106l11 0v6h-11z" fill="url(#hp)" stroke="#000"/><path d="M527 113h9" stroke="#000"/><path d="M536 110v5l3-2.500z"/>
<path d="M558.500 108h12v6h-12z" fill="url(#hp)" stroke="#000"/><path d="M570 111h5" stroke="#000"/><path d="M575 108.500v5l3-2.500z"/>
<path d="M598 113h11v5h-11z" fill="url(#hp)" stroke="#000"/><path d="M605 111h9" stroke="#000"/><path d="M614 108.500v5l3-2.500z"/>
<rect x="867.500" y="103.500" width="10" height="10" fill="#808080" stroke="#000"/><path d="M865.500 105.500v10h10" fill="none" stroke="#808080"/><path d="M870 103l3-2h6v-1M880 106h5M880 112h5" stroke="#000" stroke-dasharray="1 1" fill="none"/><path d="M886 102h5l-2.500 3zM886 110h5l-2.500 3z"/><path d="M866 117h9l2-1" stroke="#a0a0a0" fill="none" stroke-width="1.500"/>

<!-- separators -->
<path d="M178.500 90v37M342.500 90v37M505.500 90v37M669.500 90v37M835.500 90v37M997.500 90v37" stroke="#808080"/>
<path d="M179.500 90v37M343.500 90v37M506.500 90v37M670.500 90v37M836.500 90v37M998.500 90v37" stroke="#fff"/>

<!-- toolbox icons -->
<path d="M98 145l6 6M104 145l-6 6" stroke="#000" stroke-width="1.500" transform="translate(-.5,.5)"/>
<path d="M24 176v10l3-2 3 5 2-1-3-5h4z" fill="#6060b8" stroke="#303070"/>
<rect x="21.500" y="204.500" width="14" height="11" fill="none" stroke="#000" stroke-dasharray="4 2"/>
<path d="M21 227v9l5-4.500z"/>
<path d="M19 243h10l-5 4z"/>
<path d="M19 598h10l-5 4z"/>
<path d="M17 269v-5M35 269v-5M17 267h18M19 265l-2 2 2 2M33 265l2 2-2 2" stroke="#203050" fill="none"/><text x="22" y="265" font-size="8" font-weight="bold" font-family="Liberation Sans" fill="#203050">1.2</text>
<circle cx="23" cy="291" r="5.500" fill="#fff" stroke="#000" stroke-width="1.200"/><path d="M23 285.500a5.500 5.500 0 0 1 5.500 5.500H23zM23 296.500a5.500 5.500 0 0 1-5.500-5.500H23z" fill="#000"/><path d="M16 291h14M23 284v14" stroke="#000"/><text x="29" y="288" font-size="8" font-weight="bold" font-family="Liberation Sans" fill="#222">1.2</text>
<text x="18" y="321" font-size="21" font-weight="bold" font-family="Liberation Serif" fill="#303060">A</text>
<path d="M17 342l7-4h3M17 342v-3M17 342h3" stroke="#303030" fill="none"/><text x="27" y="342" font-size="9" font-weight="bold" font-family="Liberation Serif" fill="#303060">A1</text>
<path d="M16 368l7-11h10l5 7-6 4z" fill="url(#bp)" stroke="#202060"/><path d="M30 357l9 10h-10" fill="#a0a8e0" stroke="#202060"/>
<path d="M21 394l13-12" stroke="#303060" stroke-width="1.200"/>
<circle cx="27" cy="411" r="8" fill="none" stroke="#202050" stroke-width="1.300"/>
<path d="M18 441l3-10c2-3 12-1 15-1l-7 8M18 441h18" fill="none" stroke="#202050" stroke-width="1.200"/><path d="M18 441h18" stroke="#202050" stroke-dasharray="1 1" stroke-width="2"/>
<path d="M18.500 450.500h12l6 6v12h-18z" fill="#fff" stroke="#000" stroke-width="1.300"/><path d="M22 462v-7h6v3h6v4z" fill="#fff" stroke="#000"/>
<path d="M16 481h21" stroke="#444"/><path d="M17 480l4-3 4 3z" fill="#203050"/><path d="M30 484l4-3 4 3zM30 485h8" fill="#203050" stroke="#203050" stroke-width=".4"/><path d="M28 481v5h10" stroke="#444" fill="none" stroke-dasharray="1 1"/>
<path d="M18 509h21" stroke="#444" stroke-dasharray="1 2"/><path d="M24 508l4-5 4 5z" fill="#203050"/>
<circle cx="28" cy="531" r="4" fill="#b8c0e0" stroke="#203050"/><path d="M21 531h-3M38 531h-3M28 524v-3M28 541v-3" stroke="#203050" stroke-dasharray="1 1"/><path d="M24 526l4-4 4 4M24 536l4 4 4-4" fill="none" stroke="#203050"/>
<path d="M18.500 560.500v-11l6-1 6 1 5 8v8h-17z" fill="#fff" stroke="#000" stroke-width="1.300"/><path d="M24 561l5-11 2 1-5 11z" fill="#000060"/>
<circle cx="28" cy="579" r="7.500" fill="#fff" stroke="#000" stroke-dasharray="2 1" stroke-width="1.300"/><path d="M28 571v16M25 573v12M28 577h8M28 581h8" stroke="#000" stroke-width="1.300"/>
<circle cx="28" cy="617" r="4.500" fill="#fff" stroke="#2030a0"/><text x="26" y="620" font-size="7" font-family="Liberation Sans">1</text><path d="M28 622v10" stroke="#2030a0" stroke-dasharray="2 1"/>
<path d="M19 642l8-3v10l-8 3zM27 639l8 2" fill="none" stroke="#b0b0b0"/><path d="M30 643l6-1v12l-6 2z" fill="#2030a0" stroke="#101040"/><path d="M30 643c-2 0-2 13 0 13" fill="#8090d0" stroke="#101040"/>
<path d="M21 665l8-5v16h-8zM29 660l7 5v11h-7z" fill="#c0c4e0" stroke="#202060"/><path d="M21 670h15M29 665v11" stroke="#202060"/>
<path d="M104 615l-3 5h6zM104 671l3-5h-6z" fill="#000" transform="translate(.5,0)"/>

<!-- canvas scroll arrows -->
<path d="M1031 144l4.500-4.500 4.500 4.500z"/><path d="M1031 672l4.500 4.500 4.500-4.500z"/>

<!-- bottom bar icons -->
<path d="M7 687v9M10 691h3M7 696h3" stroke="#000" stroke-dasharray="1 1"/><path d="M11 692l6-5 6 5h-2v5h-8v-5z" fill="#d98a50" stroke="#402010"/>
<path d="M31 686h10v12h-10z" fill="#fff" stroke="#000"/><circle cx="39" cy="691" r="4" fill="#d8e0f0" stroke="#203080"/><path d="M42 694l3 4" stroke="#203080" stroke-width="1.500"/>
<path d="M57 695h14v2H55zM58 693l4-3 2 2 5-4" fill="none" stroke="#000" stroke-width="1.300"/>
<path d="M222 687v8l4-4z"/>
<circle cx="245" cy="690" r="5" fill="#fff" stroke="#2030a0" stroke-width="1.200"/><path d="M249 694l3 3" stroke="#2030a0" stroke-width="1.500"/><path d="M252 686h5M254.500 684v5M252 692h5" stroke="#000"/>
<circle cx="272" cy="690" r="5" fill="#fff" stroke="#000" stroke-width="1.200"/><path d="M270 690h4M272 688v4M276 694l3 3" stroke="#000" stroke-width="1.300"/>
<circle cx="295" cy="690" r="5" fill="#fff" stroke="#000" stroke-width="1.200"/><path d="M293 690h4M299 694l3 3" stroke="#000" stroke-width="1.300"/>
<path d="M315 693v-4l1-1v3-5l1-1 1 1v4-4l1-1 1 1v4-3l1-1 1 1v8c0 1-1 2-2 2h-3c-1 0-2-1-2-3z" fill="#fff" stroke="#000"/>
<circle cx="344" cy="691" r="5" fill="#fff" stroke="#000"/><path d="M337 685h3M337 685v3M351 697h-3M351 697v-3M349 694l2 3" stroke="#000" fill="none"/>
<path d="M365 687l-3-1 1 3c-1 3 1 7 5 8 3 0 6-2 5-5 0-3-4-2-5-3s0-2-3-2z" fill="#fff" stroke="#000"/>
<circle cx="468" cy="690" r="5" fill="#fff" stroke="#000" stroke-width="1.200"/><path d="M472 694l3 3M457 691h5M459 688l-3 3 3 3" stroke="#000" stroke-width="1.300" fill="none"/>
<circle cx="487" cy="690" r="5" fill="#e8e8e8" stroke="#a0a0a0" stroke-width="1.200"/><path d="M491 694l3 3M494 691h4M496 688l3 3-3 3" stroke="#a0a0a0" stroke-width="1.300" fill="none"/>
<path d="M513 687v8l-4-4z"/>
<path d="M1017 687v8l4-4z"/><path d="M1032 698l9-9M1036 698l5-5" stroke="#808080"/>

<!-- status icons -->
<rect x="1150.500" y="710" width="16" height="8" rx="2" fill="#c8c8c8" stroke="#333"/><path d="M1153 712h10" stroke="#666"/>
<rect x="1252.500" y="708" width="11" height="11" fill="#b8b8b8" stroke="#222" stroke-dasharray="1 .5" stroke-width="1.500"/>

<!-- dialog icons -->
<g transform="translate(423,145)"><g transform="scale(.45)"><use href="#arc"/></g></g>
<path d="M931 148l7 7M938 148l-7 7" stroke="#000" stroke-width="1.500"/>

<rect x="437" y="186" width="18" height="18" fill="url(#dp)"/><path d="M446 188v14M439 195h14" stroke="#000"/>
<rect x="437" y="224" width="18" height="15" fill="url(#dp)"/><path d="M437 229.500h18M437 234.500h18M443.500 224v15M449.500 224v15" stroke="#444" stroke-dasharray="1 1"/><path d="M437 241h17" stroke="#000" stroke-width="2"/><path d="M452 238l5 3-5 3z"/>
<rect x="442" y="254" width="14" height="19" fill="url(#dp)"/><path d="M442 260.500h14M442 266.500h14M449.500 254v19" stroke="#444" stroke-dasharray="1 1"/><path d="M439 258v17" stroke="#000" stroke-width="2"/><path d="M436 259l3-5 3 5z"/>
<rect x="601" y="224" width="22" height="19" fill="url(#bp)"/><rect x="603" y="224" width="18" height="19" fill="url(#dp)"/><path d="M605 241h17" stroke="#000" stroke-width="2"/><path d="M620 238l5 3-5 3z"/>
<rect x="601" y="253" width="22" height="23" fill="url(#bp)"/><rect x="608" y="253" width="14" height="23" fill="url(#dp)"/><path d="M606 258v17" stroke="#000" stroke-width="2"/><path d="M603 259l3-5 3 5z"/>

<path d="M437 323l12-7 13 12-12 8z" fill="url(#dp)"/><path d="M442 320l5 11 11-5" fill="none" stroke="#000" stroke-width="1.500"/><path d="M440 323l2-3 2 2M456 324l2 2-3 1" fill="none" stroke="#000"/>
<path d="M437 431l11-11M437 431h20" stroke="#000" fill="none"/><text x="445" y="431" font-size="10" font-style="italic" font-weight="bold" font-family="Liberation Serif">α</text><path d="M437 432.500h20" stroke="#000" stroke-dasharray="1 1"/>

<rect x="595" y="313" width="18" height="15" fill="url(#dp)"/><path d="M604 314v13M597 320.500h14" stroke="#000"/>
<rect x="595" y="337" width="18" height="13" fill="url(#dp)"/><path d="M595 352h17" stroke="#000" stroke-width="1.500"/><path d="M610 349l4 3-4 3z"/>
<rect x="604" y="367" width="12" height="18" fill="url(#dp)"/><path d="M597 370v15" stroke="#000" stroke-width="1.500"/><path d="M594 372l3-4 3 4z"/>

<path d="M593.500 426v11M588 431.500h11M616.500 426v11M611 431.500h11M639.500 424v15M633 431.500h13" stroke="#000"/>
<rect x="608" y="423" width="17" height="17" fill="url(#dp)"/><rect x="631" y="422" width="18" height="18" fill="none" stroke="#000" stroke-dasharray="1 2"/>
<rect x="665" y="423" width="15" height="15" fill="url(#dp)"/><path d="M665 424v14h15" stroke="#000" stroke-width="1.500" fill="none"/><path d="M662 427l3-3 3 3M677 435l3 3-3 3" stroke="#000" fill="none"/>
<path d="M687 424h18v16h-18z" fill="url(#dp)"/><path d="M691 423l4 13 9-6" stroke="#000" stroke-width="1.500" fill="none"/>
<rect x="720" y="423" width="17" height="17" fill="url(#dp)"/>
<path d="M744 423l16 17M760 423l-16 17" stroke="#000" stroke-width="2.500"/>

<circle cx="882" cy="304" r="4.500" fill="#fff" stroke="#000" stroke-width="1.300"/><path d="M880 304h4M885.500 308l3 3" stroke="#000" stroke-width="1.500"/>
<circle cx="918" cy="304" r="4.500" fill="#fff" stroke="#000" stroke-width="1.300"/><path d="M916 304h4M918 302v4M921.500 308l3 3" stroke="#000" stroke-width="1.500"/>

<!-- sliders -->
<path d="M781 376h48" stroke="#606060"/><path d="M781 377h48" stroke="#fff"/><path d="M877 376h50" stroke="#606060"/><path d="M877 377h50" stroke="#fff"/>
<path d="M828 371h5v10l-3 2-2-2z" fill="url(#wh)" stroke="#808080"/><path d="M878 372h5v10l-2 2-3-2z" fill="url(#wh)" stroke="#808080"/>
<path d="M784 385v2M795 385v2M807 385v2M818 385v2M829 383v4M880 383v4M892 385v2M903 385v2M915 385v2M926 385v2" stroke="#000"/>
<rect x="776" y="396" width="8" height="8" fill="url(#dp)" opacity=".5"/><rect x="831" y="396" width="8" height="8" fill="url(#dp)"/><rect x="872" y="396" width="7" height="7" fill="url(#hp)" opacity=".6"/><rect x="928" y="396" width="7" height="7" fill="url(#hp)"/>

<!-- navigator icons -->
<path d="M1356 91l6 6M1362 91l-6 6" stroke="#d4d0c8" stroke-width="1.500"/>
<path d="M1053 111h10v4h5l-1 7h-14z" fill="#c8d4f0" stroke="#102080"/><path d="M1058 113h10v-3l5 5-5 6v-3h-10z" fill="#b8d0f0" stroke="#2040a0"/><path d="M1075 122v5l3-2.500z"/>
<path d="M1248 117l7-6 8 6v3h-15z" fill="#f0b060" stroke="#302010"/><path d="M1250 116h11v7h-11z" fill="#e88a48" stroke="#302010"/>
<path d="M1280 113h6v4h8v7h-14z" fill="#f4e0a0" stroke="#302010"/><path d="M1283 114h2v3h-2z" fill="#a06020"/><path d="M1280 120h14v4h-14z" fill="#f0d070" stroke="#302010"/>
<rect x="1311.500" y="112.500" width="15" height="11" fill="#fffad0" stroke="#000"/><path d="M1318.500 115h6v7h-6zM1320 117h3M1320 119h3" fill="#fff" stroke="#000"/>
<rect x="1343.500" y="112.500" width="8" height="9" fill="#f0f0ff" stroke="#000080"/><rect x="1347.500" y="116.500" width="6" height="7" fill="#f0f0ff" stroke="#000080"/>
<path d="M1352 144l4.500-4.500 4.500 4.500z"/><path d="M1352 582l4.500 4.500 4.500-4.500z"/>
<rect x="1323.500" y="606.500" width="12" height="12" fill="#f09050" stroke="#101060" stroke-width="1.200"/><path d="M1335 601l1.500 3 3 .5-2.500 2 .8 3-2.800-1.500-2.800 1.500.8-3-2.500-2 3-.5z" fill="#ffee40"/>
<path d="M1347 605l11 13M1358 605l-11 13" stroke="#e02010" stroke-width="2.500"/>
<path d="M1062 636h12l-6 5z"/>
<path d="M1051 655h4v3h5v6h-9z" fill="#f09050" stroke="#402010"/>

<!-- taskbar icons -->
<path d="M6 739c3-2 5-2 7 0l-2 6c-2-1-5-1-7 0z" fill="#e04030"/><path d="M14 739c2 1 4 1 6 0l-2 6c-2 1-4 1-6 0z" fill="#60b030"/><path d="M4 746c2-1 5-1 7 0l-2 6c-2-1-5-1-7 0z" fill="#3080d8"/><path d="M12 746c2 1 4 1 6 0l-2 6c-2 1-4 1-6 0z" fill="#f0c020"/>
<rect x="76" y="732" width="22" height="30" rx="2" fill="#a8cce8" stroke="#5888b8"/><rect x="79" y="735" width="16" height="7" fill="#e8f0f8"/><path d="M79 746h16M79 750h16M79 754h16M79 758h16" stroke="#4878a8" stroke-width="2" stroke-dasharray="2 1"/><path d="M93 752v8" stroke="#e89830" stroke-width="3"/>
<path d="M126 733l22 3-1 26-26-7z" fill="#5a9ab8"/><path d="M128 734l20 3 3 24-25-6z" fill="#8cc8d8"/><path d="M128 734l20 3" stroke="#b0b0b0" stroke-dasharray="1 1" stroke-width="2"/><path d="M147 737l4 24-5 1z" fill="#b8a890"/>
<path d="M186 732l15 15-15 15-15-15z" fill="#fff" stroke="#111" stroke-width="2"/><path d="M195 733l-15 14h7l-6 12 17-15h-7z" fill="#f0a820" stroke="#a05010"/>
<ellipse cx="230" cy="749" rx="12" ry="10" fill="#dfe8f2" stroke="#8aa0c0"/><circle cx="224" cy="746" r="2.300" fill="#58a8e0"/><circle cx="230" cy="743" r="2.300" fill="#f0c040"/><circle cx="224" cy="752" r="2.300" fill="#60b060"/><circle cx="232" cy="755" r="2.300" fill="#e06040"/><path d="M232 762l11-28" stroke="#d88820" stroke-width="3"/><path d="M241 736l3-5 2 3z" fill="#c06040"/>
<use href="#arc" x="383" y="731"/>
<use href="#fo" x="431" y="731"/><use href="#fo" x="591" y="731"/>
<circle cx="767" cy="747" r="14.500" fill="#e04030"/><path d="M767 747L752.500 747A14.500 14.500 0 0 0 774 760z" fill="#40a040"/><path d="M767 747L774 760A14.500 14.500 0 0 0 781 739H767z" fill="#f8c820"/><circle cx="767" cy="747" r="7" fill="#fff"/><circle cx="767" cy="747" r="5.200" fill="#4088d8"/>
<g transform="translate(914,731)"><rect width="32" height="33" fill="url(#ac)" opacity=".9"/><path d="M4 33C8 12 14 2 20 2C25 2 28 18 30 33H26C24 20 22 9 19 9C15 9 11 20 9 33Z" fill="#d8dcc0"/></g>

<!-- tray -->
<ellipse cx="1127" cy="747" rx="8" ry="7" fill="#b0b8b0" stroke="#666"/><rect x="1121" y="741" width="12" height="7" rx="2" fill="#60b040"/><path d="M1119 748h16" stroke="#888" stroke-width="2"/>
<path d="M1145 746l6-4 8 3-6 7z" fill="#a0a0a0" stroke="#333"/><circle cx="1154" cy="749" r="3.500" fill="#e0a878"/><path d="M1149 758c1-4 9-4 10 0z" fill="#3060a0"/>
<path d="M1168 739v16" stroke="#888" stroke-width="1.500"/><path d="M1168 740l9 1-2 3 3 3-10 1z" fill="#f0f0f0" stroke="#888"/><circle cx="1178" cy="751" r="4.200" fill="#e04040"/><path d="M1176 749l4 4M1180 749l-4 4" stroke="#fff"/>
<ellipse cx="1199" cy="746.500" rx="6.500" ry="8.500" fill="#1a4a9a"/><path d="M1196 743l6 6-3 3v-11l3 3-6 6" stroke="#fff" fill="none"/>
<path d="M1215 744h3l4-4v13l-4-4h-3z" fill="#d4d0c8" stroke="#888"/><path d="M1224 743c2 2 2 5 0 7M1227 741c2 3 2 8 0 11" fill="none" stroke="#888"/>
<rect x="1240" y="741" width="9" height="14" fill="#a09090" stroke="#444"/><path d="M1247 744h7l-1 4-2 2v3h-1v-3l-2-2zM1249 741v3M1252 741v3" fill="#fff" stroke="#444"/><path d="M1241 749l6 6M1247 749l-6 6" stroke="#e01010" stroke-width="2"/>
<path d="M1264 752v3M1267 750v5M1270 748v7M1273 746v9M1276 744v11M1279 742v13" stroke="#808080" stroke-width="1.500"/>
<rect x="1347" y="741" width="15" height="12" fill="#2060b0"/><path d="M1347 748h15v5h-15z" fill="#104888"/><path d="M1347 753h15" stroke="#a0a0a0"/><rect x="1349" y="750" width="3" height="2" fill="#60c040"/>
</svg>

</body></html>
